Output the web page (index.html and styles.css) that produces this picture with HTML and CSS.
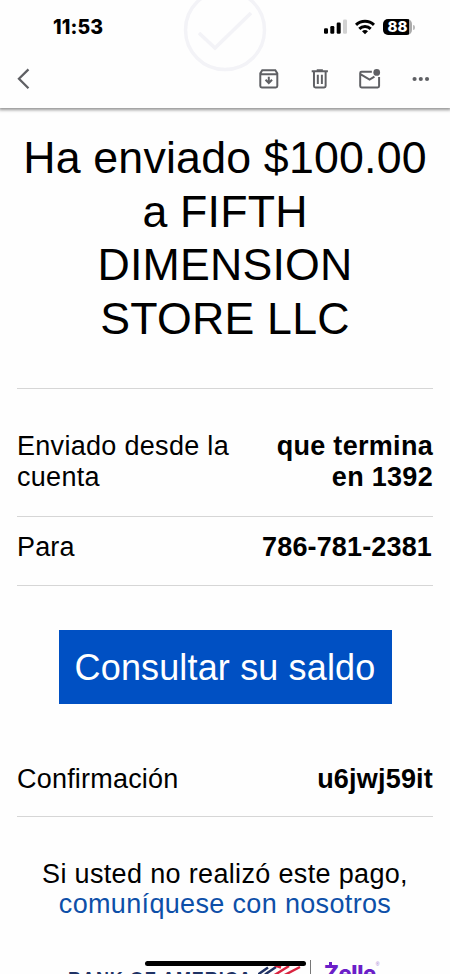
FILE: index.html
```html
<!DOCTYPE html>
<html lang="es">
<head>
    <meta charset="UTF-8">
    <meta name="viewport" content="width=device-width, initial-scale=1.0">
    <title>Ha enviado $100.00</title>
    <link rel="stylesheet" href="styles.css">
</head>
<body>

<div class="screen">
    <header class="top">
        <!-- Check mark of the email, faded under the header -->
        <svg class="watermark" width="84" height="74" viewBox="0 0 84 74" fill="none" stroke="#f3f3f7">
            <circle cx="42" cy="30" r="39.5" stroke-width="3.5"/>
            <path d="M16 33l16 15 36-35" stroke-width="3.5"/>
        </svg>

        <div class="status-bar">
            <span class="time">11:53</span>
            <div class="status-icons">
                <svg width="24" height="16" viewBox="0 0 24 16">
                    <rect x="0" y="9.2" width="4" height="5.6" rx="1.2"/>
                    <rect x="6.3" y="7" width="4" height="7.8" rx="1.2"/>
                    <rect x="12.7" y="3.6" width="4" height="11.2" rx="1.2"/>
                    <rect x="19" y="0.5" width="4" height="14.3" rx="1.2" fill="#d2d2d2"/>
                </svg>
                <svg class="wifi" width="20" height="16" viewBox="0 0 20 16" fill="none" stroke="#000" stroke-width="3">
                    <path d="M1 5.9a13 13 0 0 1 18 0"/>
                    <path d="M4.3 9.9a8.2 8.2 0 0 1 11.4 0"/>
                    <path d="M10 15.3l-3-3a4.4 4.4 0 0 1 6 0z" fill="#000" stroke="none"/>
                </svg>
                <div class="battery"><span>88</span></div>
                <i class="battery-tip"></i>
            </div>
        </div>

        <nav class="toolbar">
            <svg class="back" width="14" height="22" viewBox="0 0 14 22" fill="none" stroke="#5f6064" stroke-width="2.3">
                <path d="M11.6 1.3L2 10.8l9.6 9.5"/>
            </svg>
            <svg class="archive" width="20" height="20" viewBox="0 0 20 20" fill="none" stroke="#5f6064" stroke-width="2">
                <path d="M1.3 4.3L3.3 1.2h13.2l2 3.1v12.9q0 1.5-1.5 1.5H2.8q-1.5 0-1.5-1.5zM1.3 5.2h17.2"/>
                <path d="M9.9 7.8v6M6.6 10.8l3.3 3.3 3.3-3.3"/>
            </svg>
            <svg class="trash" width="18" height="20" viewBox="0 0 18 20" fill="none" stroke="#5f6064" stroke-width="2">
                <path d="M.7 2.2h16.4M5.8 1.2h6.2M3 2.5v14.7q0 1.5 1.5 1.5h8.8q1.5 0 1.5-1.5V2.5M6.9 5.8v9.3M11 5.8v9.3"/>
            </svg>
            <svg class="unread" width="22" height="20" viewBox="0 0 22 20" fill="none" stroke="#5f6064" stroke-width="2">
                <path d="M13 2.7H2.6Q1.2 2.7 1.2 4v13.2q0 1.4 1.4 1.4h16.3q1.4 0 1.4-1.4V8M1.4 5l9.3 5.7L15.6 7.6"/>
                <circle cx="17.9" cy="3.4" r="3.4" fill="#5f6064" stroke="none"/>
            </svg>
            <svg class="more" width="18" height="6" viewBox="0 0 18 6" fill="#5f6064">
                <circle cx="2.6" cy="3" r="2.1"/>
                <circle cx="8.9" cy="3" r="2.1"/>
                <circle cx="15.2" cy="3" r="2.1"/>
            </svg>
        </nav>
    </header>

    <main class="mail">
        <h1>Ha enviado $100.00<br>a FIFTH<br>DIMENSION<br>STORE LLC</h1>

        <div class="row account">
            <span>Enviado desde la<br>cuenta</span>
            <strong>que termina<br>en 1392</strong>
        </div>
        <div class="row phone">
            <span>Para</span>
            <strong>786-781-2381</strong>
        </div>

        <a class="button">Consultar su saldo</a>

        <div class="row confirmation">
            <span>Confirmación</span>
            <strong>u6jwj59it</strong>
        </div>

        <p class="notice">Si usted no realizó este pago,<br><a>comuníquese con nosotros</a></p>
    </main>

    <footer class="brands">
        <span class="boa">BANK OF AMERICA</span>
        <svg class="flag" width="44" height="12" viewBox="0 0 44 12" fill="none" stroke-width="2.5">
            <path d="M0 12.5L10 5.5M7 12.5L18 5" stroke="#1f3264"/>
            <path d="M16.5 13L31 4M26.5 13L42 5M17 3.5l6 2" stroke="#d9233f"/>
        </svg>
        <i class="divider"></i>
        <span class="zelle">Zelle</span>
        <i class="zelle-bar"></i>
        <sup>®</sup>
    </footer>

    <div class="home-indicator"></div>
</div>

</body>
</html>
```

FILE: styles.css
```css
body {
    margin: 0;
    background-color: #fefefe;
    color: #000;
    font-family: "Liberation Sans", Arial, sans-serif;
}
.screen {
    position: relative;
    width: 450px;
    height: 974px;
    overflow: hidden;
}
.top {
    position: relative;
    height: 108px;
    box-shadow: 0 1px 3px 1px rgba(0, 0, 0, 0.42);
}
.watermark {
    position: absolute;
    left: 183px;
    top: 0;
}
.status-bar {
    position: relative;
    display: flex;
    justify-content: space-between;
    height: 54px;
    padding: 0 35px 0 53px;
}
.time {
    font: 800 19.5px/54px Inter, sans-serif;
    letter-spacing: 0.1px;
}
.status-icons {
    display: flex;
    align-items: center;
}
.wifi {
    margin: 0 8px 0 7px;
}
.battery {
    width: 29px;
    height: 16px;
    border-radius: 5px;
    background: linear-gradient(to right, #000 26px, #aaa 26px);
    color: #fff;
    font: 800 15px/16px Inter, sans-serif;
}
.battery span {
    display: block;
    width: 29px;
    text-align: center;
}
.battery-tip {
    width: 2px;
    height: 5px;
    margin-left: 1px;
    border-radius: 0 2px 2px 0;
    background-color: #bbb;
}
.toolbar {
    position: relative;
    display: flex;
    align-items: center;
    height: 49px;
    padding: 0 20px 0 17px;
}
.archive {
    margin-left: 228px;
}
.trash {
    margin-left: 32px;
}
.unread {
    margin-left: 31px;
}
.more {
    margin-left: 31px;
}
.mail {
    padding: 23px 17px 0;
}
h1 {
    margin: 0 -10px;
    height: 257px;
    font-size: 44.7px;
    font-weight: normal;
    line-height: 53.6px;
    letter-spacing: 0.2px;
    text-align: center;
    white-space: nowrap;
}
.row {
    display: flex;
    justify-content: space-between;
    box-sizing: border-box;
    border-bottom: 1px solid #d6d6d6;
    font-size: 27px;
    line-height: 31px;
    letter-spacing: 0.3px;
    white-space: nowrap;
}
.row strong {
    text-align: right;
}
.account {
    height: 129px;
    padding-top: 42px;
    border-top: 1px solid #d6d6d6;
}
.phone {
    height: 69px;
    padding-top: 15px;
    letter-spacing: 0.15px;
}
.phone strong {
    padding-right: 1px;
}
.button {
    display: block;
    width: 333px;
    height: 74px;
    margin: 44px auto 0;
    background-color: #0050c3;
    color: #fff;
    font-size: 36px;
    line-height: 75px;
    letter-spacing: 0.15px;
    text-align: center;
}
.confirmation {
    height: 113px;
    padding-top: 60px;
    letter-spacing: 0.2px;
}
.notice {
    margin: 43px 0 0;
    font-size: 27px;
    line-height: 29.5px;
    letter-spacing: 0.34px;
    text-align: center;
    white-space: nowrap;
}
.notice a {
    color: #0d4fa8;
}
.brands {
    display: flex;
    align-items: flex-start;
    position: relative;
    height: 14px;
    margin-top: 41px;
    padding-left: 68px;
}
.boa {
    width: 188px;
    padding-top: 9px;
    color: #1f3264;
    font-size: 18px;
    font-weight: bold;
    line-height: 20px;
    letter-spacing: 0.95px;
    white-space: nowrap;
}
.flag {
    margin: 2px 0 0 2px;
}
.divider {
    width: 1px;
    height: 14px;
    margin-left: 8px;
    background-color: #777;
}
.zelle {
    margin-left: 13px;
    padding-top: 1px;
    color: #6b1fc8;
    font: 800 22px/24px Inter, sans-serif;
    letter-spacing: -0.4px;
}
.zelle-bar {
    position: absolute;
    left: 329px;
    top: 2px;
    width: 3px;
    height: 4px;
    background-color: #6b1fc8;
}
.brands sup {
    color: #9a70d0;
    font-size: 5px;
    line-height: 8px;
}
.home-indicator {
    position: absolute;
    left: 145px;
    bottom: 8px;
    width: 161px;
    height: 5px;
    border-radius: 3px;
    background-color: #000;
}
```
